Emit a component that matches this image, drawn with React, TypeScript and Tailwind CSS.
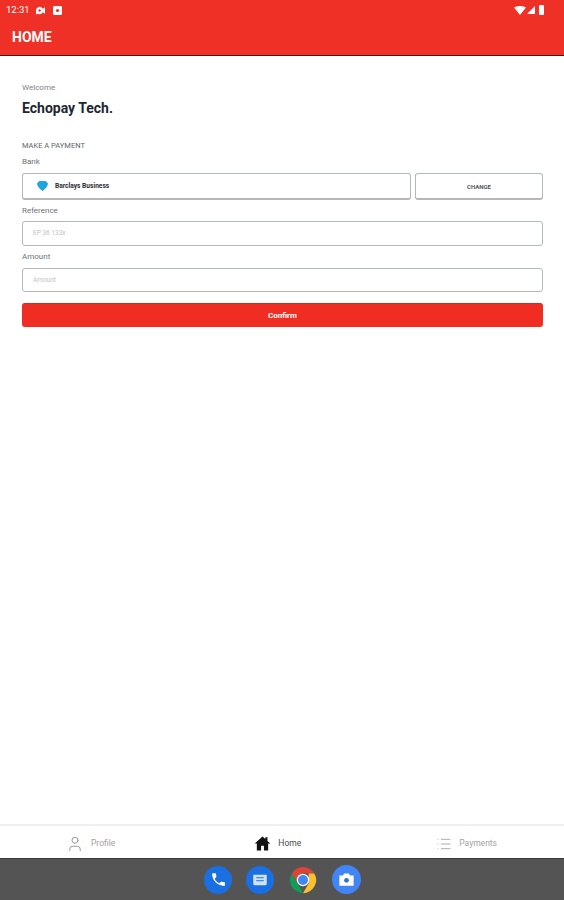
import React from 'react';
import { List, User } from 'lucide-react';

const font = "font-['Roboto','Liberation_Sans',sans-serif]";

function StatusBar() {
  return (
    <div className="h-[20px] pl-[6px] pr-[20px] flex items-center text-white">
      <span className="text-[9.5px] leading-none">12:31</span>
      <svg viewBox="0 0 12 10" className="w-[11px] h-[9px] ml-[5px]">
        <path d="M1 5a4 4 0 0 1 7.500-2L11 1.500v7L8.500 7A4 4 0 0 1 3 8.500L1 9.500z" fill="#fff" />
        <circle cx="5" cy="5" r="1.300" fill="#ef3026" />
      </svg>
      <svg viewBox="0 0 10 10" className="w-[9px] h-[9px] ml-[7px]">
        <rect width="10" height="10" rx="1.500" fill="#fff" />
        <circle cx="5" cy="5" r="1.800" fill="#ef3026" />
      </svg>
      <div className="ml-auto flex items-center gap-[1px]">
        <svg viewBox="0 0 12 9" className="w-[12px] h-[9px]">
          <path d="M0 1.500C3.500-.5 8.500-.5 12 1.500L6 9z" fill="#fff" />
        </svg>
        <svg viewBox="0 0 9 9" className="w-[8px] h-[8px]">
          <path d="M9 0v9H0z" fill="#fff" />
        </svg>
        <div className="w-[5px] h-[10px] ml-[3px] rounded-[1px] bg-white" />
      </div>
    </div>
  );
}

function BankField() {
  return (
    <div className="flex gap-[4px] h-[27px]">
      <div className="flex-1 flex items-center pl-[14px] bg-white border border-[#b4b8b8] border-b-2 rounded-[3px]">
        <svg viewBox="0 0 12 11" className="w-[11px] h-[10px]">
          <path d="M0 2.500 2.500 0h7L12 2.500c0 3-2.500 6-6 8.500-3.500-2.500-6-5.500-6-8.500z" fill="#1ea5e0" />
        </svg>
        <span className="ml-[7px] mt-[2px] text-[6.600px] font-bold text-[#2a2e33]">Barclays Business</span>
      </div>
      <button className="w-[128px] bg-white border border-[#b4b8b8] border-b-2 rounded-[3px] text-[6px] font-bold text-[#50565c]">
        CHANGE
      </button>
    </div>
  );
}

function TextBox({ placeholder, className }: { placeholder: string; className: string }) {
  return (
    <div className={`${className} flex items-center pl-[10px] bg-white border border-[#b4b8b8] rounded-[3px] text-[6.500px] text-[#c0c4c6]`}>
      {placeholder}
    </div>
  );
}

function Label({ children }: { children: React.ReactNode }) {
  return <div className="text-[8px] leading-[10px] text-[#6d7377]">{children}</div>;
}

function NavItem({ label, active, icon }: { label: string; active?: boolean; icon: React.ReactNode }) {
  return (
    <div className={active ? 'flex items-center gap-[7px] ml-[4px]' : 'flex items-center gap-[7px]'}>
      {icon}
      <span className={active ? 'text-[8.500px] text-[#4a4a4a]' : 'text-[8.500px] text-[#a3a3a3]'}>{label}</span>
    </div>
  );
}

function Dock() {
  return (
    <div className="h-[42px] bg-[#545454] border-t border-[#3a3a3a] flex items-center justify-center gap-[14px] pl-[1px]">
      <div className="w-[28px] h-[28px] rounded-full bg-[#1a6fe3] flex items-center justify-center">
        <svg viewBox="0 0 24 24" className="w-[17px] h-[17px]">
          <path
            d="M6.600 10.800c1.400 2.800 3.800 5.100 6.600 6.600l2.200-2.200c.3-.3.700-.4 1-.2 1.100.4 2.300.6 3.600.6.600 0 1 .4 1 1V20c0 .6-.4 1-1 1C10.600 21 3 13.400 3 4c0-.6.400-1 1-1h3.500c.6 0 1 .4 1 1 0 1.300.2 2.500.6 3.600.1.300 0 .7-.2 1z"
            fill="#fff"
          />
        </svg>
      </div>
      <div className="w-[28px] h-[28px] rounded-full bg-[#1a6fe3] flex items-center justify-center">
        <svg viewBox="0 0 24 24" className="w-[18px] h-[18px]">
          <path d="M3 5h18v12a2 2 0 0 1-2 2H5a2 2 0 0 1-2-2z" fill="#cfe2fb" />
          <path d="M7 9h10M7 13h10" stroke="#1a6fe3" strokeWidth="1.500" />
        </svg>
      </div>
      <svg viewBox="0 0 48 48" className="w-[30px] h-[30px]">
        <path d="M6 13.500A21 21 0 0 1 42.200 13.500H24L16 30.500z" fill="#db4437" />
        <path d="M6 13.500 16 30.500 24 45A21 21 0 0 1 6 13.500z" fill="#0f9d58" />
        <path d="M42.200 13.500A21 21 0 0 1 24 45l9-15.500V13.500z" fill="#fbc02d" />
        <circle cx="24" cy="24" r="10" fill="#fff" />
        <circle cx="24" cy="24" r="8" fill="#4285f4" />
      </svg>
      <div className="w-[29px] h-[29px] rounded-full bg-[#4285f4] flex items-center justify-center">
        <svg viewBox="0 0 24 24" className="w-[19px] h-[19px]">
          <path d="M3 7h4.500L9 4.500h6L16.500 7H21v13H3z" fill="#fff" />
          <circle cx="12" cy="13" r="3" fill="#2f6fdc" />
        </svg>
      </div>
    </div>
  );
}

export default function App() {
  return (
    <div className={`h-screen flex flex-col bg-white ${font}`}>
      <header className="h-[56px] bg-[#ef3026] border-b border-[#4a1512]">
        <StatusBar />
        <h1 className="pl-[12px] mt-[7px] text-[14px] leading-[20px] font-bold text-white">HOME</h1>
      </header>

      <main className="flex-1 pt-[27px] pl-[22px] pr-[21px]">
        <div className="text-[8px] leading-[10px] text-[#7b8084]">Welcome</div>
        <div className="mt-[6px] text-[14px] leading-[18px] font-bold text-[#1d2733]">Echopay Tech.</div>

        <div className="mt-[24px] text-[7.500px] leading-[10px] text-[#5f6569]">MAKE A PAYMENT</div>
        <div className="mt-[6px] mb-[6px]">
          <Label>Bank</Label>
        </div>
        <BankField />
        <div className="mt-[6px] mb-[5px]">
          <Label>Reference</Label>
        </div>
        <TextBox placeholder="EP 36 133x" className="h-[25px]" />
        <div className="mt-[6px] mb-[6px]">
          <Label>Amount</Label>
        </div>
        <TextBox placeholder="Amount" className="h-[24px] pt-[1px]" />
        <button className="mt-[11px] w-full h-[24px] rounded-[3px] bg-[#ef2d23] border-t border-[#d42a22] text-[8px] font-bold text-white">
          Confirm
        </button>
      </main>

      <nav className="h-[34px] pt-[3px] border-t-2 border-[#f0f0f0] flex items-center justify-between pl-[66px] pr-[67px]">
        <NavItem
          label="Profile"
          icon={<User size={18} strokeWidth={1.200} className="text-[#8f8f8f]" />}
        />
        <NavItem
          label="Home"
          active
          icon={
            <svg viewBox="0 0 24 24" className="w-[17px] h-[17px]">
              <path d="M12 2 1 12h3v10h6v-7h4v7h6V12h3l-4-3.600V3h-3v2.700z" fill="#111" />
            </svg>
          }
        />
        <NavItem
          label="Payments"
          icon={<List size={16} strokeWidth={1.200} className="text-[#9a9a9a]" />}
        />
      </nav>

      <Dock />
    </div>
  );
}
